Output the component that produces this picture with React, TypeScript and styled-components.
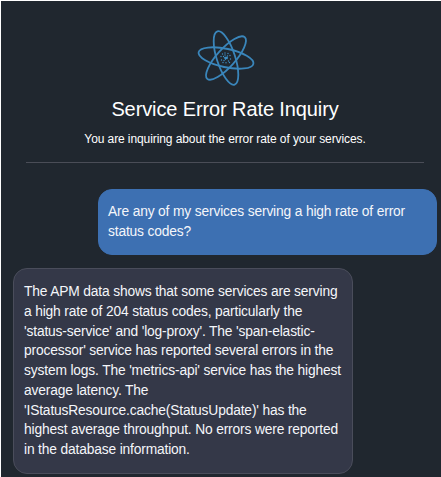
import React from "react";
import styled, { createGlobalStyle } from "styled-components";

const GlobalStyle = createGlobalStyle`
  * { box-sizing: border-box; }
  body { margin: 0; background: #fff; overflow: hidden; }
`;

const Panel = styled.main`
  margin: 1px 0 0 1px;
  height: 476px;
  background: #20272f;
  color: #fff;
  font-family: "Liberation Sans", Arial, sans-serif;
  overflow: hidden;
`;

const Header = styled.header`
  display: flex;
  flex-direction: column;
  align-items: center;
  height: 162px;
  margin: 0 17px 0 25px;
  padding-top: 27px;
  border-bottom: 1px solid #4a4d57;
`;

const Logo = styled.svg`
  display: block;
  width: 60px;
  height: 60px;
  margin-left: 1px;
`;

const Title = styled.h1`
  margin: 8px 0 0;
  font-size: 20px;
  letter-spacing: -0.11px;
  line-height: 26px;
  font-weight: 400;
  white-space: nowrap;
`;

const Subtitle = styled.p`
  margin: 9px 0 0;
  font-size: 12px;
  letter-spacing: -0.09px;
  line-height: 16px;
  white-space: nowrap;
`;

const Messages = styled.section`
  display: flex;
  flex-direction: column;
  gap: 13px;
  padding: 26px 4px 0 12px;
`;

const Bubble = styled.article<{ $own?: boolean }>`
  align-self: ${(p) => (p.$own ? "flex-end" : "flex-start")};
  width: ${(p) => (p.$own ? "339px" : "340px")};
  height: ${(p) => (p.$own ? "66px" : "206px")};
  padding: ${(p) => (p.$own ? "12px 9px" : "13px 10px")};
  border: 1px solid ${(p) => (p.$own ? "#3d70b2" : "#4a4d5b")};
  border-radius: 14px;
  background: ${(p) => (p.$own ? "#3d70b2" : "#343848")};
  color: #f4f6fa;
  font-size: 13.8px;
  letter-spacing: -0.16px;
  line-height: 19.75px;
`;

const Line = styled.span`
  display: block;
  white-space: nowrap;
`;

const question = ["Are any of my services serving a high rate of error", "status codes?"];

const answer = [
  "The APM data shows that some services are serving",
  "a high rate of 204 status codes, particularly the",
  "'status-service' and 'log-proxy'. The 'span-elastic-",
  "processor' service has reported several errors in the",
  "system logs. The 'metrics-api' service has the highest",
  "average latency. The",
  "'IStatusResource.cache(StatusUpdate)' has the",
  "highest average throughput. No errors were reported",
  "in the database information.",
];

const specks = [
  [-3.5, -4], [-1, -5], [2, -4.5], [4, -2.5], [-5, -1.5], [-2.5, -1.5], [1.5, -2],
  [4.5, 1], [-4.5, 2], [-2, 2.5], [2.5, 3], [0, 4.8], [-3, 4.5], [3.5, 4.5], [-1, -3],
];

function AtomLogo() {
  return (
    <Logo viewBox="-30 -30 60 60" aria-hidden="true">
      <g fill="none" stroke="#3a86bb" strokeWidth="1.8">
        {[12, 72, 132].map((angle) => (
          <ellipse key={angle} rx="28" ry="9.2" transform={`rotate(${angle})`} />
        ))}
      </g>
      <g fill="#3d8fc6">
        {specks.map(([x, y]) => (
          <circle key={`${x},${y}`} cx={x} cy={y} r="0.7" />
        ))}
        <path d="M-2.2 -.4 0 -1.6 2 -.8 1.6 1.2 .5 .9 -.5 2.2 -1.3 1Z" />
      </g>
    </Logo>
  );
}

export default function App() {
  return (
    <>
      <GlobalStyle />
      <Panel>
        <Header>
          <AtomLogo />
          <Title>Service Error Rate Inquiry</Title>
          <Subtitle>You are inquiring about the error rate of your services.</Subtitle>
        </Header>
        <Messages>
          <Bubble $own>
            {question.map((text) => <Line key={text}>{text}</Line>)}
          </Bubble>
          <Bubble>
            {answer.map((text) => <Line key={text}>{text}</Line>)}
          </Bubble>
        </Messages>
      </Panel>
    </>
  );
}
